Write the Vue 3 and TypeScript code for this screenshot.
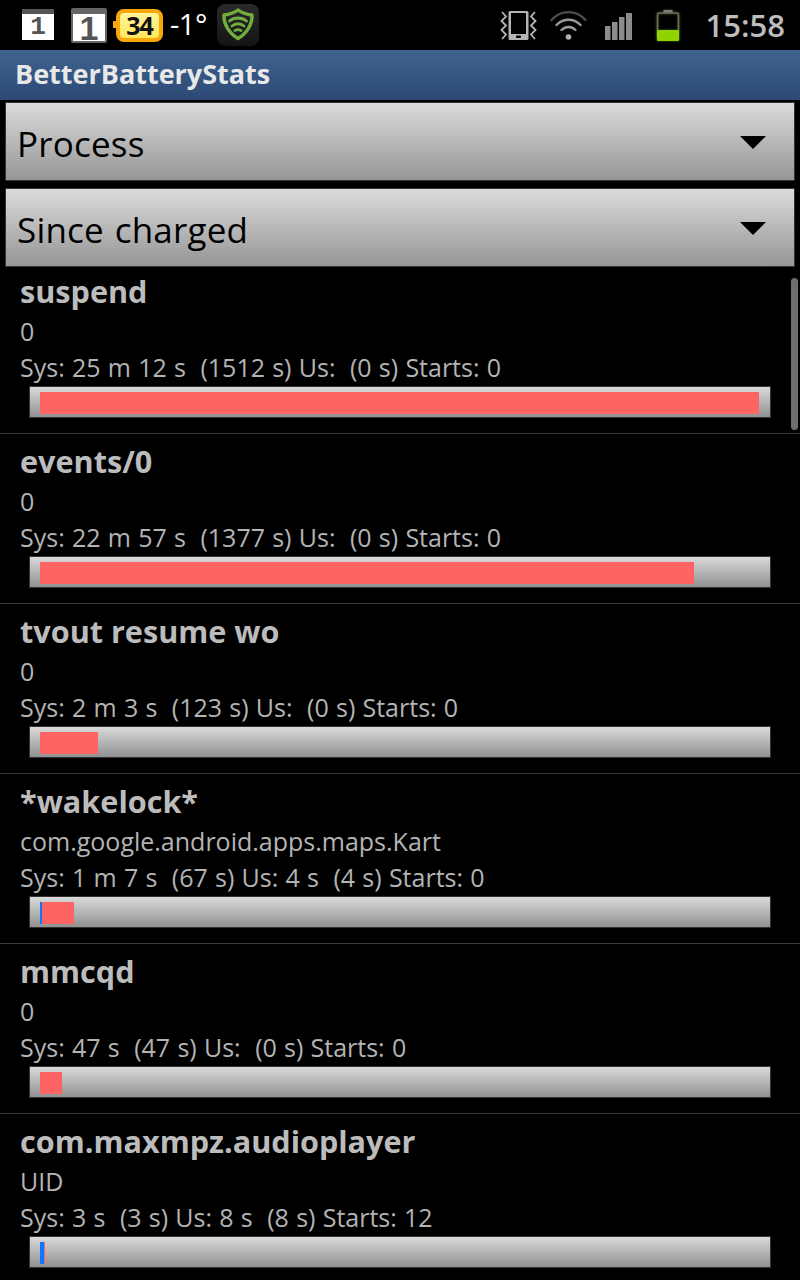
<script setup lang="ts">
interface Row {
  title: string
  sub: string
  stats: string
  us: number
  sys: number
}

const rows: Row[] = [
  { title: 'suspend', sub: '0', stats: 'Sys: 25 m 12 s  (1512 s) Us:  (0 s) Starts: 0', us: 0, sys: 719 },
  { title: 'events/0', sub: '0', stats: 'Sys: 22 m 57 s  (1377 s) Us:  (0 s) Starts: 0', us: 0, sys: 654 },
  { title: 'tvout resume wo', sub: '0', stats: 'Sys: 2 m 3 s  (123 s) Us:  (0 s) Starts: 0', us: 0, sys: 58 },
  { title: '*wakelock*', sub: 'com.google.android.apps.maps.Kart', stats: 'Sys: 1 m 7 s  (67 s) Us: 4 s  (4 s) Starts: 0', us: 2, sys: 32 },
  { title: 'mmcqd', sub: '0', stats: 'Sys: 47 s  (47 s) Us:  (0 s) Starts: 0', us: 0, sys: 22 },
  { title: 'com.maxmpz.audioplayer', sub: 'UID', stats: 'Sys: 3 s  (3 s) Us: 8 s  (8 s) Starts: 12', us: 4, sys: 1 },
]

const spinners = ['Process', 'Since charged']
</script>

<template>
  <div class="screen">
    <div class="status">
      <div class="cal small"><span>1</span></div>
      <div class="cal big"><span>1</span></div>
      <div class="badge">34</div>
      <div class="temp">-1°</div>
      <div class="lookout">
        <svg width="42" height="42" viewBox="0 0 42 42" fill="none" stroke="#6fae3c" stroke-linecap="round">
          <path d="M21 6 C25 9 30 10.5 35 11 C35.5 20 30 29 21 34.5 C12 29 6.5 20 7 11 C12 10.5 17 9 21 6 Z" stroke-width="3.4" stroke-linejoin="round" />
          <path d="M12.5 17 C17 13 25 13 29.5 17" stroke-width="2.8" />
          <path d="M15 22 C18.5 19 23.5 19 27 22" stroke-width="2.8" />
          <path d="M18 26.5 C20 25.4 22 25.4 24 26.5" stroke-width="2.8" />
        </svg>
      </div>
      <div class="spacer"></div>
      <svg class="ic-vibrate" width="37" height="31" viewBox="0 0 37 31" fill="none">
        <rect x="8.5" y="1" width="20" height="29" rx="1.5" fill="#b4b4b4" />
        <rect x="11" y="3" width="15" height="21" fill="#000" />
        <rect x="16" y="25.5" width="5" height="2.5" rx="1" fill="#000" />
        <path d="M2 2 L6 6.5 L1.5 11 L6 15.5 L1.5 20 L6 24.5 L2 29" stroke="#b4b4b4" stroke-width="1.8" />
        <path d="M35 2 L31 6.5 L35.5 11 L31 15.5 L35.5 20 L31 24.5 L35 29" stroke="#b4b4b4" stroke-width="1.8" />
      </svg>
      <svg class="ic-wifi" width="37" height="30" viewBox="0 0 37 30" fill="none" stroke-linecap="round">
        <path d="M1.5 10 C11 -0.5 26 -0.5 35.5 10" stroke="#4c4c4c" stroke-width="2.4" />
        <path d="M6.5 15 C13 8 24 8 30.5 15" stroke="#9a9a9a" stroke-width="2.4" />
        <path d="M11.5 20 C15.5 16 21.5 16 25.5 20" stroke="#9a9a9a" stroke-width="2.4" />
        <circle cx="18.5" cy="27" r="2.8" fill="#b0b0b0" />
      </svg>
      <svg class="ic-signal" width="27" height="27" viewBox="0 0 27 27">
        <rect x="0" y="13" width="5.5" height="14" fill="#8c8c8c" />
        <rect x="7" y="9" width="5.5" height="18" fill="#8c8c8c" />
        <rect x="14" y="4" width="5.5" height="23" fill="#8c8c8c" />
        <rect x="21" y="0" width="6" height="27" fill="#8c8c8c" />
      </svg>
      <svg class="ic-battery" width="24" height="31" viewBox="0 0 24 31" fill="none">
        <rect x="7.5" y="0" width="9" height="3" fill="#7a7a7a" />
        <rect x="1.5" y="3" width="21" height="27" rx="1.5" stroke="#6a6a6a" stroke-width="1.6" />
        <rect x="1" y="20" width="22" height="11" rx="1" fill="#8fd400" />
      </svg>
      <div class="clock">15:58</div>
    </div>

    <div class="titlebar">BetterBatteryStats</div>

    <div v-for="label in spinners" :key="label" class="spinner">
      <span>{{ label }}</span>
      <svg class="arrow" width="26" height="13" viewBox="0 0 26 13"><path d="M0 0 H26 L13 13 Z" fill="#000" /></svg>
    </div>

    <div class="list">
      <div class="scrollbar"></div>
      <div v-for="row in rows" :key="row.title" class="row">
        <div class="row-title">{{ row.title }}</div>
        <div class="row-sub">{{ row.sub }}</div>
        <div class="row-stats">{{ row.stats }}</div>
        <div class="bar">
          <div class="fill us" :style="{ width: row.us + 'px' }"></div>
          <div class="fill sys" :style="{ width: row.sys + 'px' }"></div>
        </div>
      </div>
    </div>
  </div>
</template>

<style scoped>
.screen {
  position: relative;
  width: 800px;
  height: 1280px;
  overflow: hidden;
  background: #000;
  font-family: "Open Sans", "Noto Sans", sans-serif;
}

.status {
  height: 50px;
  display: flex;
  align-items: flex-start;
  background: #000;
}

.cal {
  box-sizing: border-box;
  display: flex;
  justify-content: center;
  align-items: center;
  font-weight: 700;
  color: #555;
  background: #fff;
}
.cal.small {
  width: 32px;
  height: 31px;
  margin: 9px 0 0 22px;
  border-top: 5px solid #555;
  font-family: "Liberation Mono", monospace;
  font-size: 26px;
  line-height: 1;
}
.cal.big {
  width: 36px;
  height: 35px;
  margin: 8px 0 0 17px;
  border: 2px solid #666;
  border-top-width: 6px;
  border-radius: 2px;
  font-family: "Liberation Sans", sans-serif;
  font-size: 34px;
  line-height: 1;
}

.badge {
  position: relative;
  box-sizing: border-box;
  width: 47px;
  height: 33px;
  margin: 9px 0 0 9px;
  border: 4px solid #f7a70a;
  border-radius: 8px;
  background: linear-gradient(#fff59a, #ffe65c);
  color: #111;
  font-size: 25px;
  font-weight: 700;
  line-height: 25px;
  text-align: center;
  letter-spacing: -1px;
}
.badge::before {
  content: "";
  position: absolute;
  left: -7px;
  top: 8px;
  width: 4px;
  height: 7px;
  background: #f7a70a;
}

.temp {
  margin: 4px 0 0 7px;
  width: 47px;
  color: #fff;
  font-size: 29px;
  letter-spacing: -0.5px;
  line-height: 40px;
  white-space: nowrap;
}

.lookout {
  width: 42px;
  height: 42px;
  margin: 4px 0 0 0;
  border-radius: 8px;
  background: linear-gradient(#2a2a2a, #141414);
}

.spacer { flex: 1; }

.ic-vibrate { margin-top: 10px; }
.ic-wifi { margin: 10px 0 0 13px; }
.ic-signal { margin: 13px 0 0 18px; }
.ic-battery { margin: 10px 0 0 24px; filter: drop-shadow(0 0 1px rgba(150, 220, 0, 0.5)); }

.clock {
  margin: 5px 15px 0 26px;
  color: #bdbdbd;
  font-size: 31px;
  font-weight: 600;
  line-height: 40px;
}

.titlebar {
  box-sizing: border-box;
  height: 50px;
  padding-left: 15px;
  background: linear-gradient(#3f638f, #2c4a75);
  color: #e8e8e8;
  font-size: 27px;
  font-weight: 700;
  line-height: 48px;
}

.spinner {
  box-sizing: border-box;
  width: 790px;
  height: 79px;
  margin: 2px 0 7px 5px;
  padding: 0 29px 0 12px;
  display: flex;
  justify-content: space-between;
  align-items: center;
  background: linear-gradient(#dcdcdc, #959595);
  box-shadow: inset 0 0 0 1px #333;
  color: #000;
  font-size: 35px;
  letter-spacing: 0.2px;
  word-spacing: 1.5px;
}
.spinner + .spinner { margin-top: 0; margin-bottom: 0; }
.spinner span { margin-top: 4px; }
.arrow { margin-top: 2px; }

.list {
  position: relative;
  margin-top: -3px;
}

.scrollbar {
  position: absolute;
  top: 14px;
  left: 791px;
  width: 7px;
  height: 152px;
  border-radius: 4px;
  background: #6e6e6e;
}

.row {
  box-sizing: border-box;
  height: 170px;
  padding: 7px 0 0 20px;
  border-bottom: 1px solid #3a3a3a;
  color: #b4b4b4;
  white-space: pre;
}
.row:last-child { border-bottom: 0; }

.row-title {
  font-size: 30.6px;
  font-weight: 700;
  line-height: 40px;
  color: #bcbcbc;
}
.row-sub,
.row-stats {
  font-size: 25px;
  line-height: 36px;
}
.row-stats { word-spacing: 0.75px; }
.row-sub { margin-top: 2px; }

.bar {
  box-sizing: border-box;
  display: flex;
  width: 742px;
  height: 32px;
  margin: 1px 0 0 9px;
  padding: 6px 10px 3px 11px;
  background: linear-gradient(#dcdcdc, #8f8f8f);
  box-shadow: inset 0 0 0 1px #333;
}

.fill { height: 22px; }
.us { background: #0a78ff; }
.sys { background: #ff6464; }
</style>
